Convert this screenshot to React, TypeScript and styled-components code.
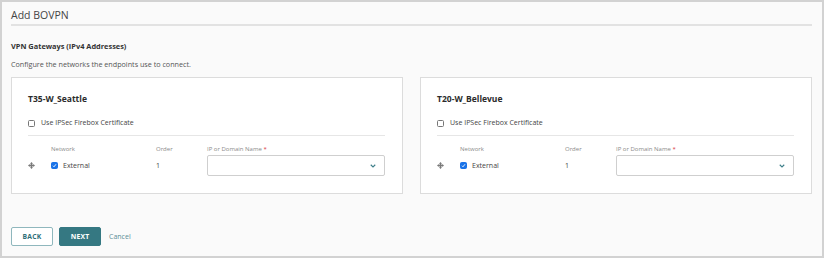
import styled, { createGlobalStyle } from "styled-components";

const GlobalStyle = createGlobalStyle`
    html, body {
        margin: 0;
        padding: 0;
        background: #ffffff;
    }
    body {
        font-family: "Open Sans", "Noto Sans", Arial, sans-serif;
        color: #333;
    }
`;

const Frame = styled.div`
    box-sizing: border-box;
    width: 824px;
    height: 258px;
    border: 2px solid #d2d2d2;
    background: #fafafa;
    padding: 6px 10px 0 9px;
    display: flex;
    flex-direction: column;
`;

const PageTitle = styled.h1`
    margin: 0;
    font-size: 10.5px;
    font-weight: 400;
    color: #444;
    line-height: 14px;
    padding-bottom: 2px;
    border-bottom: 2px solid #e2e2e2;
`;

const SectionTitle = styled.h2`
    margin: 15px 0 0;
    font-size: 7.4px;
    font-weight: 700;
    color: #333;
    line-height: 10px;
`;

const Hint = styled.p`
    margin: 8px 0 0;
    font-size: 7.2px;
    color: #555;
    line-height: 10px;
`;

const Cards = styled.div`
    display: grid;
    grid-template-columns: 1fr 1fr;
    gap: 17px;
    margin-top: 8px;
`;

const Card = styled.section`
    box-sizing: border-box;
    height: 117px;
    background: #fff;
    border: 1px solid #dcdcdc;
    padding: 15px 17px 0 16px;
`;

const CardTitle = styled.h3`
    margin: 0;
    font-size: 8.5px;
    font-weight: 700;
    color: #2b2b2b;
    line-height: 12px;
`;

const CheckRow = styled.label`
    display: flex;
    align-items: center;
    gap: 6px;
    margin-top: 13px;
    font-size: 7px;
    color: #444;
    line-height: 10px;
`;

const Box = styled.span<{ $checked?: boolean }>`
    box-sizing: border-box;
    width: 7px;
    height: 7px;
    border-radius: 1.5px;
    flex: none;
    display: flex;
    align-items: center;
    justify-content: center;
    border: 1px solid ${(p) => (p.$checked ? "#1a73e8" : "#777")};
    background: ${(p) => (p.$checked ? "#1a73e8" : "#fff")};
`;

const Divider = styled.hr`
    margin: 7px 0 0;
    border: none;
    border-top: 1px solid #e6e6e6;
`;

const Grid = styled.div`
    display: grid;
    grid-template-columns: 23px 105px 51px 1fr;
    align-items: center;
    margin-top: 9px;
    row-gap: 2px;
`;

const ColLabel = styled.span`
    font-size: 6px;
    color: #8a8a8a;
    line-height: 8px;
`;

const Required = styled.span`
    color: #d9363e;
`;

const Cell = styled.span`
    display: flex;
    align-items: center;
    gap: 5px;
    font-size: 7px;
    color: #444;
`;

const Select = styled.div`
    box-sizing: border-box;
    height: 21px;
    background: #fff;
    border: 1px solid #cfcfcf;
    border-radius: 2px;
    display: flex;
    align-items: center;
    justify-content: flex-end;
    padding-right: 8px;
`;

const Footer = styled.div`
    display: flex;
    align-items: center;
    gap: 6px;
    margin-top: 33px;
`;

const Button = styled.button<{ $primary?: boolean }>`
    box-sizing: border-box;
    width: 42px;
    height: 19px;
    border-radius: 2px;
    font-family: inherit;
    font-size: 6.8px;
    font-weight: 700;
    letter-spacing: 0.2px;
    cursor: pointer;
    border: 1px solid ${(p) => (p.$primary ? "#357882" : "#8fb7bd")};
    background: ${(p) => (p.$primary ? "#357882" : "#fff")};
    color: ${(p) => (p.$primary ? "#fff" : "#2f6e78")};
`;

const CancelLink = styled.a`
    margin-left: 2px;
    font-size: 7px;
    color: #5b8d96;
    cursor: pointer;
`;

function Check() {
    return (
        <svg width="5" height="5" viewBox="0 0 10 10">
            <path d="M2 5.5 L4 7.5 L8 2.5" fill="none" stroke="#fff" strokeWidth="1.8" />
        </svg>
    );
}

function MoveIcon() {
    return (
        <svg width="7" height="7" viewBox="0 0 14 14">
            <path
                d="M7 0 L10 3.5 H8.5 V5.5 H10.5 V4 L14 7 L10.5 10 V8.5 H8.5 V10.5 H10 L7 14 L4 10.5 H5.5 V8.5 H3.5 V10 L0 7 L3.5 4 V5.5 H5.5 V3.5 H4 Z"
                fill="#7a7a7a"
            />
        </svg>
    );
}

function Chevron() {
    return (
        <svg width="6" height="4" viewBox="0 0 12 8">
            <path d="M1.5 1.5 L6 6 L10.5 1.5" fill="none" stroke="#3f7f8a" strokeWidth="2.2" />
        </svg>
    );
}

interface IGateway {
    name: string;
}

const gateways: IGateway[] = [{ name: "T35-W_Seattle" }, { name: "T20-W_Bellevue" }];

function GatewayCard({ name }: IGateway) {
    return (
        <Card>
            <CardTitle>{name}</CardTitle>
            <CheckRow>
                <Box />
                Use IPSec Firebox Certificate
            </CheckRow>
            <Divider />
            <Grid>
                <span />
                <ColLabel>Network</ColLabel>
                <ColLabel>Order</ColLabel>
                <ColLabel>
                    IP or Domain Name <Required>*</Required>
                </ColLabel>

                <Cell>
                    <MoveIcon />
                </Cell>
                <Cell>
                    <Box $checked>
                        <Check />
                    </Box>
                    External
                </Cell>
                <Cell>1</Cell>
                <Select>
                    <Chevron />
                </Select>
            </Grid>
        </Card>
    );
}

export default function App() {
    return (
        <>
            <GlobalStyle />
            <Frame>
                <PageTitle>Add BOVPN</PageTitle>
                <SectionTitle>VPN Gateways (IPv4 Addresses)</SectionTitle>
                <Hint>Configure the networks the endpoints use to connect.</Hint>
                <Cards>
                    {gateways.map((g) => (
                        <GatewayCard key={g.name} name={g.name} />
                    ))}
                </Cards>
                <Footer>
                    <Button>BACK</Button>
                    <Button $primary>NEXT</Button>
                    <CancelLink>Cancel</CancelLink>
                </Footer>
            </Frame>
        </>
    );
}
